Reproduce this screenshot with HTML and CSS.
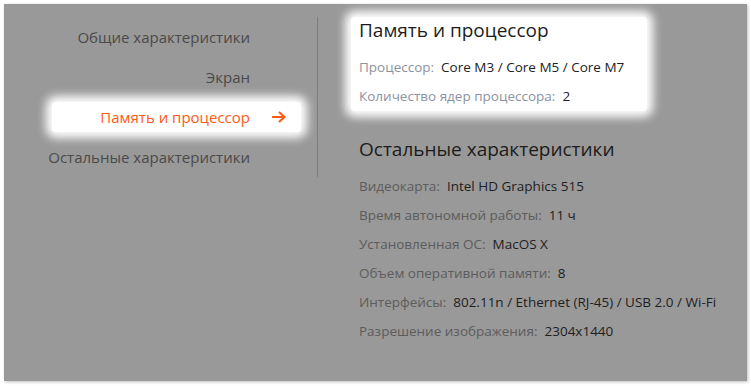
FILE: index.html
```html
<!DOCTYPE html>
<html lang="ru">
<head>
    <meta charset="UTF-8">
    <meta name="viewport" content="width=device-width, initial-scale=1.0">
    <title>Характеристики</title>
    <link rel="stylesheet" href="styles.css">
</head>
<body>

    <div class="specs">
        <ul class="specs--nav">
            <li class="specs--nav-item">Общие характеристики</li>
            <li class="specs--nav-item">Экран</li>
            <li class="specs--nav-item is-active">
                Память и процессор
                <svg class="specs--arrow" width="15" height="12" viewBox="0 0 15 12">
                    <path d="M1 6 H13 M8 1 L13.5 6 L8 11" fill="none" stroke="#ff5a14" stroke-width="2"/>
                </svg>
            </li>
            <li class="specs--nav-item">Остальные характеристики</li>
        </ul>

        <div class="specs--content">
            <div class="specs--group is-active">
                <h2 class="specs--title">Память и процессор</h2>
                <div class="specs--row"><span class="specs--label">Процессор:</span><span class="specs--value">Core M3 / Core M5 / Core M7</span></div>
                <div class="specs--row"><span class="specs--label">Количество ядер процессора:</span><span class="specs--value">2</span></div>
            </div>

            <div class="specs--group">
                <h2 class="specs--title">Остальные характеристики</h2>
                <div class="specs--row"><span class="specs--label">Видеокарта:</span><span class="specs--value">Intel HD Graphics 515</span></div>
                <div class="specs--row"><span class="specs--label">Время автономной работы:</span><span class="specs--value">11 ч</span></div>
                <div class="specs--row"><span class="specs--label">Установленная ОС:</span><span class="specs--value">MacOS X</span></div>
                <div class="specs--row"><span class="specs--label">Объем оперативной памяти:</span><span class="specs--value">8</span></div>
                <div class="specs--row"><span class="specs--label">Интерфейсы:</span><span class="specs--value">802.11n / Ethernet (RJ-45) / USB 2.0 / Wi-Fi</span></div>
                <div class="specs--row"><span class="specs--label">Разрешение изображения:</span><span class="specs--value">2304x1440</span></div>
            </div>
        </div>
    </div>

</body>
</html>
```

FILE: styles.css
```css
html, body {
    height: 100%;
    overflow: hidden;
}
body {
    font-family: 'Open Sans', sans-serif;
    background-color: #ffffff;
    margin: 0;
}

.specs {
    margin: 4px;
    width: 743px;
    height: 364px;
    padding-top: 13px;
    background-color: #999999;
    box-shadow: 1px 1px 3px rgba(0, 0, 0, .25);
    display: grid;
    grid-template-columns: 314px 1fr;
    align-items: start;
}

.specs--nav {
    list-style: none;
    margin: 0;
    padding: 5px 16px 5px 48px;
    border-right: 1px solid #7c7c7c;
    display: flex;
    flex-direction: column;
    gap: 10px;
}

.specs--nav-item {
    height: 30px;
    line-height: 30px;
    font-size: 15px;
    color: #4a4a4a;
    padding-right: 51px;
    white-space: nowrap;
    display: flex;
    justify-content: flex-end;
    align-items: center;
    border-radius: 4px;
}
.specs--nav-item.is-active {
    color: #ff5a14;
    padding-right: 15px;
    background-color: #ffffff;
    box-shadow: 0 0 10px 6px #ffffff;
}
.specs--arrow {
    flex: none;
    margin-left: 21px;
}

.specs--content {
    padding-left: 33px;
}

.specs--group {
    width: 280px;
    padding: 0 8px;
    margin-bottom: 25px;
    border-radius: 4px;
}
.specs--group.is-active {
    background-color: #ffffff;
    box-shadow: 0 0 10px 6px #ffffff;
}

.specs--title {
    margin: 0 0 10px;
    font-size: 19px;
    font-weight: 400;
    line-height: 26px;
    color: #1c1c1c;
}

.specs--row {
    font-size: 13.5px;
    line-height: 29px;
    white-space: nowrap;
}
.specs--label {
    color: #5c5c5c;
    margin-right: 7px;
}
.specs--value {
    color: #1e1e1e;
}
.is-active .specs--label {
    color: #8c93a0;
}
.is-active .specs--value {
    color: #222222;
}
```
